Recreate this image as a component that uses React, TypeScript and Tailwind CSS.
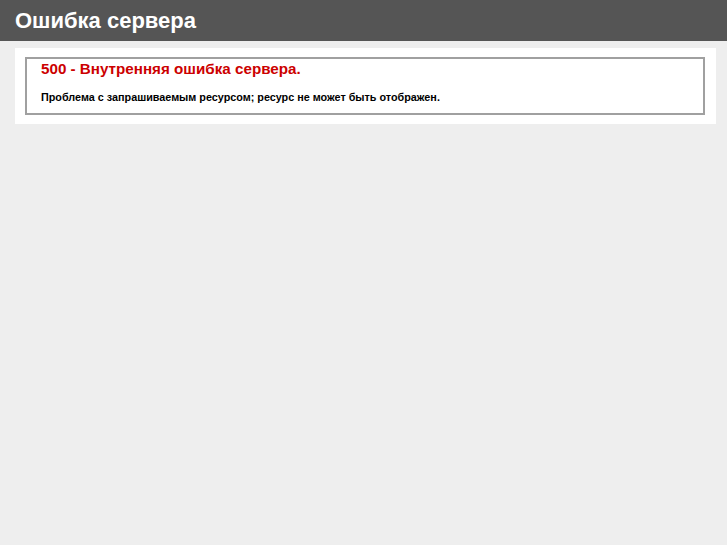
export default function App() {
  return (
    <div className="min-h-[545px] bg-[#eeeeee] font-['Liberation_Sans',Arial,sans-serif] text-[11px]">
      <div className="flex h-[41px] items-center bg-[#555555] px-[15px]">
        <h1 className="text-[22px] leading-none font-bold text-white">Ошибка сервера</h1>
      </div>
      <div className="pt-[7px] pl-[15px]">
        <div className="w-[701px] bg-white px-[10px] py-[9px]">
          <div className="h-[58px] w-[680px] border-2 border-[#a0a0a0] px-[14px] pt-[1px]">
            <h2 className="text-[15.2px] leading-[18px] font-bold text-[#cc0000]">
              500 - Внутренняя ошибка сервера.
            </h2>
            <h3 className="mt-[13px] text-[10.8px] leading-[12px] font-bold text-black">
              Проблема с запрашиваемым ресурсом; ресурс не может быть отображен.
            </h3>
          </div>
        </div>
      </div>
    </div>
  );
}
